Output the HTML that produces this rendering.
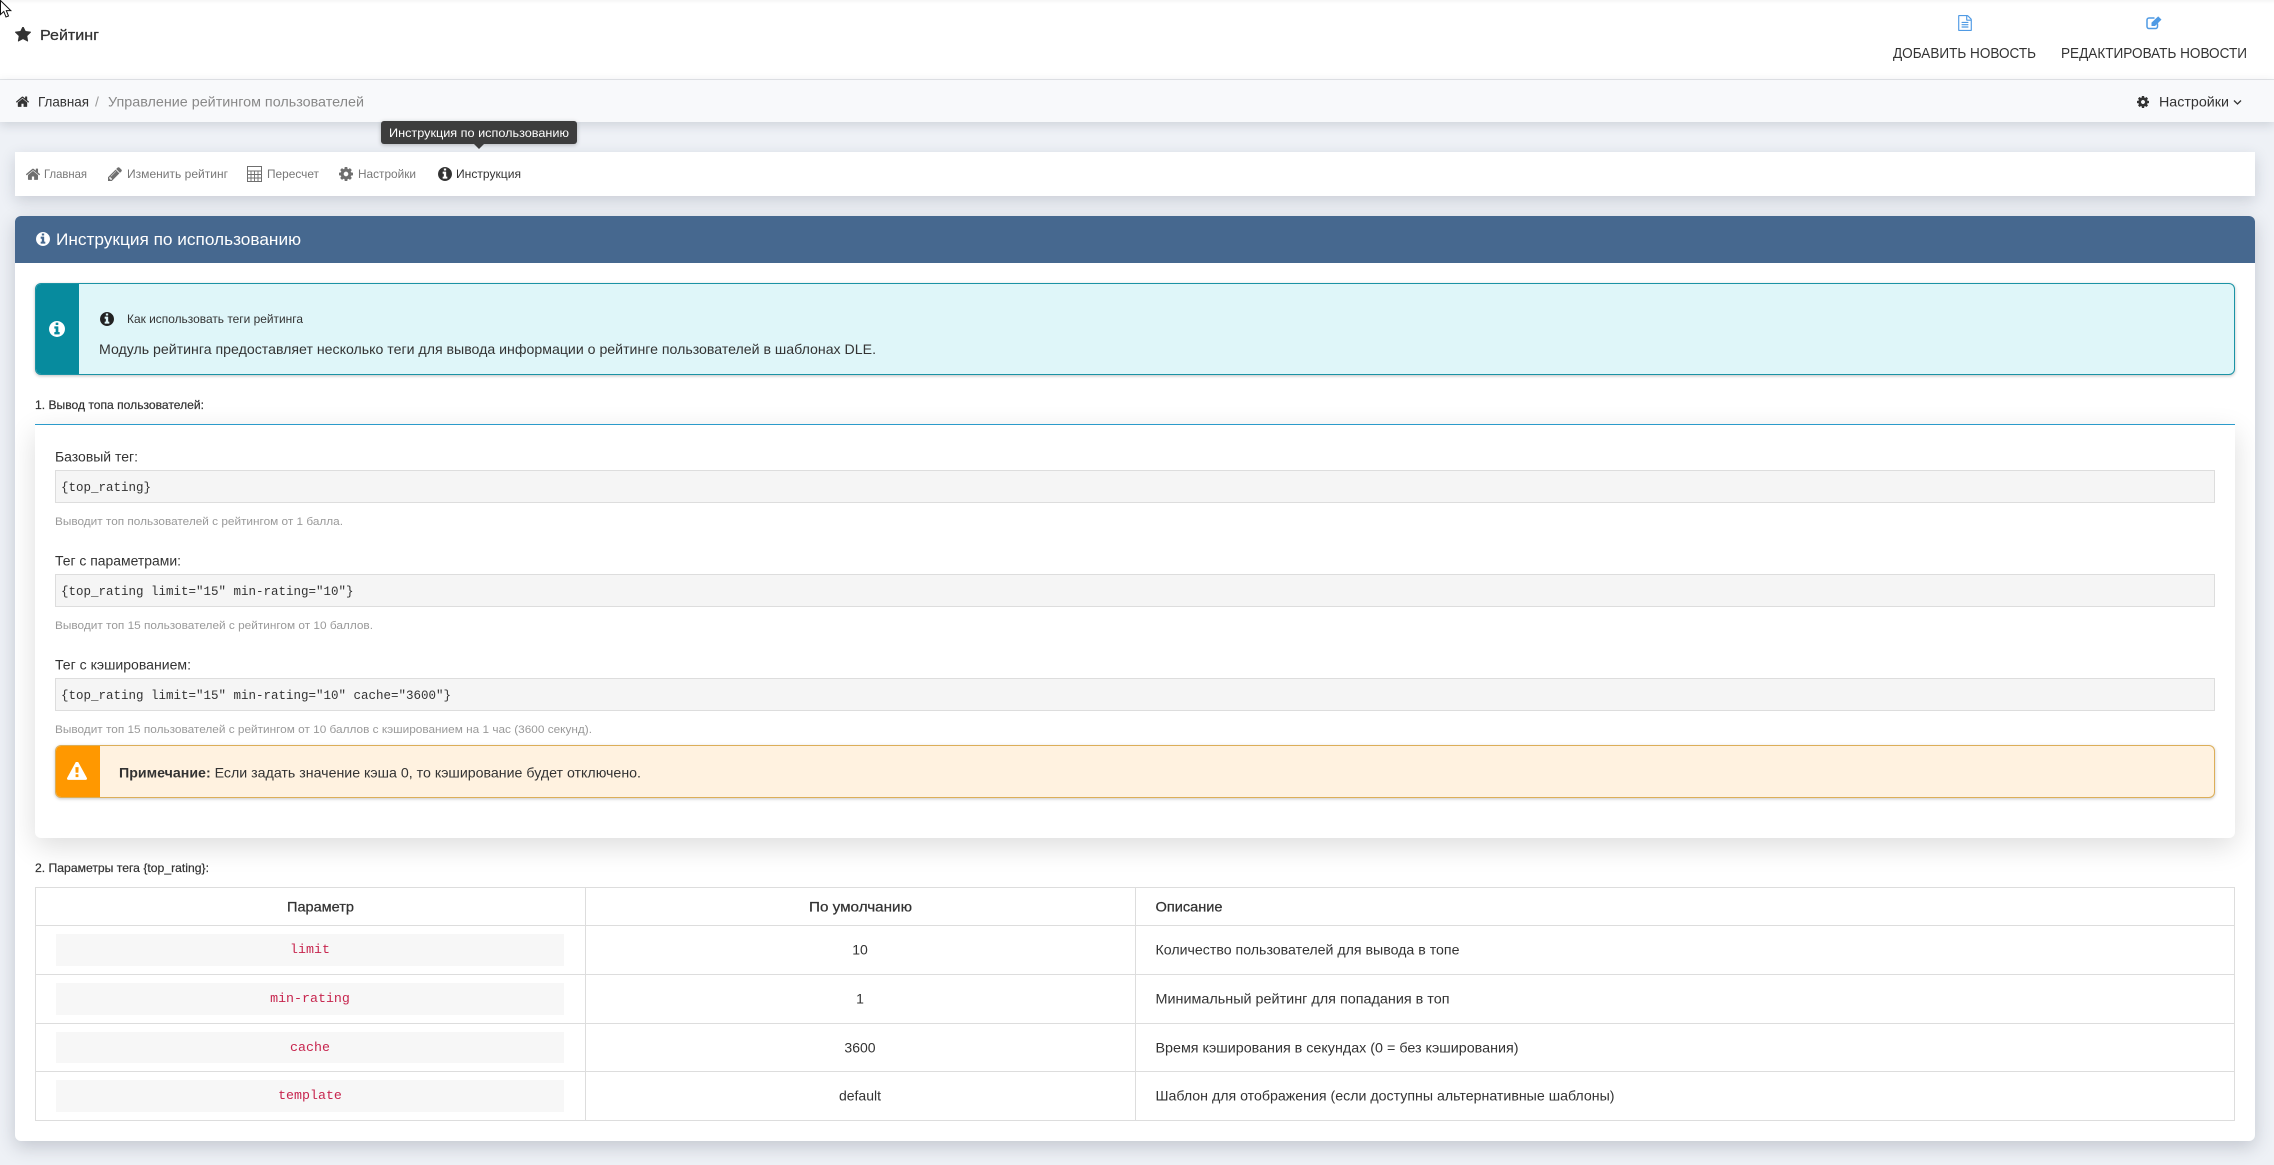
<!DOCTYPE html>
<html lang="ru">
<head>
<meta charset="utf-8">
<title>Рейтинг</title>
<style>
html,body{margin:0;padding:0;background:#eef1f6;}
#root{position:relative;width:2274px;height:1165px;overflow:hidden;background:#eef1f6;font-family:"Liberation Sans",sans-serif;}
.b{position:absolute;box-sizing:border-box;}
#ov{position:absolute;left:0;top:0;}
text{font-family:"Liberation Sans",sans-serif;fill:#333;}
.m{font-family:"Liberation Mono",monospace;}
</style>
</head>
<body>
<div id="root">
  <div class="b" style="left:0;top:0;width:2274px;height:80px;background:linear-gradient(#f6f6f6 0,#fff 4px);border-bottom:1px solid #e4e6e9;"></div>
  <div class="b" style="left:0;top:80px;width:2274px;height:42px;background:#f8f9fb;box-shadow:0 3px 10px rgba(40,50,70,.16);"></div>

  <div class="b" style="left:15px;top:152px;width:2240px;height:44px;background:#fff;box-shadow:0 5px 14px rgba(40,50,70,.18);"></div>

  <div class="b" style="left:15px;top:216px;width:2240px;height:925px;background:#fff;border-radius:6px;box-shadow:0 6px 18px rgba(40,50,70,.22);"></div>
  <div class="b" style="left:15px;top:216px;width:2240px;height:925px;border-radius:6px;overflow:hidden;">
    <div class="b" style="left:20px;top:209px;width:2200px;height:413px;background:#fff;border-radius:0 0 6px 6px;box-shadow:0 8px 28px rgba(0,0,0,.14);"></div>
    <div class="b" style="left:0;top:0;width:2240px;height:47px;background:#46688f;"></div>
  </div>

  <div class="b" style="left:35px;top:283px;width:2200px;height:92px;background:#dff6f9;border:1px solid #1a93a5;border-radius:6px;overflow:hidden;box-shadow:0 1px 3px rgba(0,0,0,.25);">
    <div class="b" style="left:-1px;top:-1px;width:44px;height:92px;background:#078b9e;"></div>
  </div>
  <div class="b" style="left:35px;top:424px;width:2200px;height:1px;background:#2b9bcb;"></div>

  <div class="b" style="left:55px;top:470px;width:2160px;height:33px;background:#f5f5f5;border:1px solid #ddd;"></div>
  <div class="b" style="left:55px;top:574px;width:2160px;height:33px;background:#f5f5f5;border:1px solid #ddd;"></div>
  <div class="b" style="left:55px;top:678px;width:2160px;height:33px;background:#f5f5f5;border:1px solid #ddd;"></div>

  <div class="b" style="left:55px;top:745px;width:2160px;height:53px;background:#fff2e0;border:1px solid #dcae58;border-radius:6px;overflow:hidden;box-shadow:0 1px 3px rgba(0,0,0,.22);">
    <div class="b" style="left:-1px;top:-1px;width:45px;height:53px;background:#ff9800;"></div>
  </div>

  <div class="b" style="left:35px;top:887px;width:2200px;height:234px;background:#fff;border:1px solid #ddd;"></div>
  <div class="b" style="left:36px;top:925px;width:2198px;height:1px;background:#ddd;"></div>
  <div class="b" style="left:36px;top:974px;width:2198px;height:1px;background:#ddd;"></div>
  <div class="b" style="left:36px;top:1023px;width:2198px;height:1px;background:#ddd;"></div>
  <div class="b" style="left:36px;top:1071px;width:2198px;height:1px;background:#ddd;"></div>
  <div class="b" style="left:585px;top:888px;width:1px;height:232px;background:#ddd;"></div>
  <div class="b" style="left:1135px;top:888px;width:1px;height:232px;background:#ddd;"></div>
  <div class="b" style="left:56px;top:934px;width:508px;height:32px;background:#f7f7f7;"></div>
  <div class="b" style="left:56px;top:983px;width:508px;height:32px;background:#f7f7f7;"></div>
  <div class="b" style="left:56px;top:1032px;width:508px;height:31px;background:#f7f7f7;"></div>
  <div class="b" style="left:56px;top:1080px;width:508px;height:32px;background:#f7f7f7;"></div>

  <div class="b" style="left:381px;top:121px;width:196px;height:23px;background:#3d3d3d;border-radius:3px;box-shadow:0 1px 4px rgba(0,0,0,.25);"></div>
  <div class="b" style="left:474px;top:144px;width:0;height:0;border-left:5px solid transparent;border-right:5px solid transparent;border-top:5px solid #3d3d3d;"></div>

  <svg id="ov" width="2274" height="1165" viewBox="0 0 2274 1165" xmlns="http://www.w3.org/2000/svg">
    <defs>
      <symbol id="i-info" viewBox="128 128 1536 1536"><path d="M1152 1376v-160q0-14-9-23t-23-9h-96v-512q0-14-9-23t-23-9h-320q-14 0-23 9t-9 23v160q0 14 9 23t23 9h96v320h-96q-14 0-23 9t-9 23v160q0 14 9 23t23 9h448q14 0 23-9t9-23zm-128-896v-160q0-14-9-23t-23-9h-192q-14 0-23 9t-9 23v160q0 14 9 23t23 9h192q14 0 23-9t9-23zm640 416q0 209-103 385.5t-279.5 279.5-385.5 103-385.5-103-279.5-279.5-103-385.5 103-385.5 279.5-279.5 385.5-103 385.5 103 279.5 279.5 103 385.5z"/></symbol>
      <symbol id="i-star" viewBox="64 128 1664 1536"><path d="M1728 647q0 22-26 48l-363 354 86 500q1 7 1 20 0 21-10.5 35.5t-30.5 14.5q-19 0-40-12l-449-236-449 236q-22 12-40 12-21 0-31.5-14.5t-10.5-35.5q0-6 2-20l86-500-364-354q-25-27-25-48 0-37 56-46l502-73 225-455q19-41 49-41t49 41l225 455 502 73q56 9 56 46z"/></symbol>
      <symbol id="i-home" viewBox="96 200 1600 1340"><path d="M1472 992v480q0 26-19 45t-45 19h-384v-384h-256v384h-384q-26 0-45-19t-19-45v-480q0-1 .5-3t.5-3l575-474 575 474q1 2 1 6zm223-69l-62 74q-8 9-21 11h-3q-13 0-21-7l-692-577-692 577q-12 8-24 7-13-2-21-11l-62-74q-8-10-7-23.5t11-21.5l719-599q32-26 76-26t76 26l244 204v-195q0-14 9-23t23-9h192q14 0 23 9t9 23v408l219 182q10 8 11 21.5t-7 23.5z"/></symbol>
      <symbol id="i-cog" viewBox="128 128 1536 1536"><path d="M1152 896q0-106-75-181t-181-75-181 75-75 181 75 181 181 75 181-75 75-181zm512-109v222q0 12-8 23t-20 13l-185 28q-19 54-39 91 35 50 107 138 10 12 10 25t-9 23q-27 37-99 108t-94 71q-12 0-26-9l-138-108q-44 23-91 38-16 136-29 186-7 28-36 28h-222q-14 0-24.5-8.5t-11.5-21.5l-28-184q-49-16-90-37l-141 107q-10 9-25 9-14 0-25-11-126-114-165-168-7-10-7-23 0-12 8-23 15-21 51-66.5t54-70.5q-27-50-41-99l-183-27q-13-2-21-12.5t-8-23.5v-222q0-12 8-23t19-13l186-28q14-46 39-92-40-57-107-138-10-12-10-24 0-10 9-23 26-36 98.5-107.5t94.5-71.5q13 0 26 10l138 107q44-23 91-38 16-136 29-186 7-28 36-28h222q14 0 24.5 8.5t11.5 21.5l28 184q49 16 90 37l142-107q9-9 24-9 13 0 25 10 129 119 165 170 7 8 7 22 0 12-8 23-15 21-51 66.5t-54 70.5q26 50 41 98l183 28q13 2 21 12.5t8 23.5z"/></symbol>
      <symbol id="i-pencil" viewBox="128 128 1536 1536"><path d="M491 1536l91-91-235-235-91 91v107h128v128h107zm523-928q0-22-22-22-10 0-17 7l-542 542q-7 7-7 17 0 22 22 22 10 0 17-7l542-542q7-7 7-17zm-54-192l416 416-832 832h-416v-416zm683 96q0 53-37 90l-166 166-416-416 166-165q36-38 90-38 53 0 91 38l235 234q37 39 37 91z"/></symbol>
      <symbol id="i-warn" viewBox="0 64 1792 1600"><path d="M1024 1375v-190q0-14-9.5-23.5t-22.5-9.5h-192q-13 0-22.5 9.5t-9.5 23.5v190q0 14 9.5 23.5t22.5 9.5h192q13 0 22.5-9.5t9.5-23.5zm-2-374l18-459q0-12-10-19-13-11-24-11h-220q-11 0-24 11-10 7-10 21l17 457q0 10 10 16.5t24 6.5h185q14 0 23.5-6.5t10.5-16.5zm-14-934l768 1408q35 63-2 126-17 29-46.5 46t-63.5 17h-1536q-34 0-63.5-17t-46.5-46q-37-63-2-126l768-1408q17-31 47-49t65-18 65 18 47 49z"/></symbol>
      <symbol id="i-file" viewBox="128 0 1536 1792"><path d="M1596 380q28 28 48 76t20 88v1152q0 40-28 68t-68 28h-1344q-40 0-68-28t-28-68v-1600q0-40 28-68t68-28h896q40 0 88 20t76 48zm-444-244v376h376q-10-29-22-41l-313-313q-12-12-41-22zm384 1528v-1024h-416q-40 0-68-28t-28-68v-416h-768v1536h1280zm-1024-864q0-14 9-23t23-9h704q14 0 23 9t9 23v64q0 14-9 23t-23 9h-704q-14 0-23-9t-9-23v-64zm736 224q14 0 23 9t9 23v64q0 14-9 23t-23 9h-704q-14 0-23-9t-9-23v-64q0-14 9-23t23-9h704zm0 256q14 0 23 9t9 23v64q0 14-9 23t-23 9h-704q-14 0-23-9t-9-23v-64q0-14 9-23t23-9h704z"/></symbol>
    </defs>

    <!-- header -->
    <use href="#i-star" x="15" y="27" width="16" height="15" fill="#333"/>
    <text x="40" y="40" font-size="15" textLength="59" lengthAdjust="spacingAndGlyphs" stroke="#333" stroke-width=".25">Рейтинг</text>
    <use href="#i-file" x="1958" y="15" width="14" height="16" fill="#4f9ae4"/>
    <g>
      <path d="M2157.500 23.500V26.500A2 2 0 0 1 2155.500 28.500H2149A2 2 0 0 1 2147 26.500V20A2 2 0 0 1 2149 18H2154.500" fill="none" stroke="#4f9ae4" stroke-width="1.500"/>
      <path d="M2151.500 22.600L2158.200 16.400L2161.500 19.600L2155 26H2151.500Z" fill="#4f9ae4"/>
    </g>
    <text x="1893" y="58" font-size="14.500" textLength="143" lengthAdjust="spacingAndGlyphs">ДОБАВИТЬ НОВОСТЬ</text>
    <text x="2061" y="58" font-size="14.500" textLength="186" lengthAdjust="spacingAndGlyphs">РЕДАКТИРОВАТЬ НОВОСТИ</text>

    <!-- breadcrumbs -->
    <use href="#i-home" x="16" y="96" width="13" height="11" fill="#333"/>
    <text x="38" y="106.500" font-size="14" textLength="51" lengthAdjust="spacingAndGlyphs">Главная</text>
    <text x="95" y="106.500" font-size="14" style="fill:#999">/</text>
    <text x="108" y="106.500" font-size="14" textLength="256" lengthAdjust="spacingAndGlyphs" style="fill:#888">Управление рейтингом пользователей</text>
    <use href="#i-cog" x="2137" y="96" width="12" height="12" fill="#333"/>
    <text x="2159" y="106.500" font-size="14" textLength="70" lengthAdjust="spacingAndGlyphs">Настройки</text>
    <polyline points="2234,100.500 2237.500,104 2241,100.500" fill="none" stroke="#333" stroke-width="1.300"/>

    <!-- tooltip -->
    <text x="389" y="137" font-size="12" textLength="180" lengthAdjust="spacingAndGlyphs" style="fill:#fff">Инструкция по использованию</text>

    <!-- nav -->
    <use href="#i-home" x="26" y="168" width="14" height="12" fill="#6f6f6f"/>
    <text x="44" y="178" font-size="12" textLength="43" lengthAdjust="spacingAndGlyphs" style="fill:#777">Главная</text>
    <use href="#i-pencil" x="108" y="167" width="14" height="14" fill="#6f6f6f"/>
    <text x="127" y="178" font-size="12" textLength="101" lengthAdjust="spacingAndGlyphs" style="fill:#777">Изменить рейтинг</text>
    <g fill="none" stroke="#6f6f6f">
      <rect x="247.500" y="166.500" width="14" height="15" stroke-width="1"/>
      <path d="M247.500 171h14M247.500 174.500h14M247.500 178h14M251 171v10.500M254.500 171v10.500M258 171v10.500" stroke-width=".9"/>
    </g>
    <text x="267" y="178" font-size="12" textLength="52" lengthAdjust="spacingAndGlyphs" style="fill:#777">Пересчет</text>
    <use href="#i-cog" x="339" y="167" width="14" height="14" fill="#6f6f6f"/>
    <text x="358" y="178" font-size="12" textLength="58" lengthAdjust="spacingAndGlyphs" style="fill:#777">Настройки</text>
    <use href="#i-info" x="438" y="167" width="14" height="14" fill="#333"/>
    <text x="456" y="178" font-size="12" textLength="65" lengthAdjust="spacingAndGlyphs" style="fill:#333">Инструкция</text>

    <!-- panel title -->
    <use href="#i-info" x="36" y="232" width="14" height="14" fill="#fff"/>
    <text x="56" y="245" font-size="17" textLength="245" lengthAdjust="spacingAndGlyphs" style="fill:#fff">Инструкция по использованию</text>

    <!-- info alert -->
    <use href="#i-info" x="49" y="321" width="16" height="16" fill="#fff"/>
    <use href="#i-info" x="100" y="312" width="14" height="14" fill="#222"/>
    <text x="127" y="323" font-size="12" textLength="176" lengthAdjust="spacingAndGlyphs">Как использовать теги рейтинга</text>
    <text x="99" y="354" font-size="14" textLength="777" lengthAdjust="spacingAndGlyphs">Модуль рейтинга предоставляет несколько теги для вывода информации о рейтинге пользователей в шаблонах DLE.</text>

    <text x="35" y="409" font-size="12" textLength="169" lengthAdjust="spacingAndGlyphs" stroke="#333" stroke-width=".2">1. Вывод топа пользователей:</text>

    <!-- rows -->
    <text x="55" y="461.500" font-size="13.500" textLength="83" lengthAdjust="spacingAndGlyphs">Базовый тег:</text>
    <text class="m" x="61" y="491" font-size="12.500">{top_rating}</text>
    <text x="55" y="525" font-size="11" textLength="288" lengthAdjust="spacingAndGlyphs" style="fill:#999">Выводит топ пользователей с рейтингом от 1 балла.</text>

    <text x="55" y="565.500" font-size="13.500" textLength="126" lengthAdjust="spacingAndGlyphs">Тег с параметрами:</text>
    <text class="m" x="61" y="595" font-size="12.500">{top_rating limit="15" min-rating="10"}</text>
    <text x="55" y="629" font-size="11" textLength="318" lengthAdjust="spacingAndGlyphs" style="fill:#999">Выводит топ 15 пользователей с рейтингом от 10 баллов.</text>

    <text x="55" y="669.500" font-size="13.500" textLength="136" lengthAdjust="spacingAndGlyphs">Тег с кэшированием:</text>
    <text class="m" x="61" y="699" font-size="12.500">{top_rating limit="15" min-rating="10" cache="3600"}</text>
    <text x="55" y="733" font-size="11" textLength="537" lengthAdjust="spacingAndGlyphs" style="fill:#999">Выводит топ 15 пользователей с рейтингом от 10 баллов с кэшированием на 1 час (3600 секунд).</text>

    <!-- warning -->
    <use href="#i-warn" x="67" y="762" width="20" height="18" fill="#fff"/>
    <text x="119" y="777.500" font-size="14" textLength="522" lengthAdjust="spacingAndGlyphs"><tspan font-weight="bold">Примечание:</tspan> Если задать значение кэша 0, то кэширование будет отключено.</text>

    <text x="35" y="872" font-size="12" textLength="174" lengthAdjust="spacingAndGlyphs" stroke="#333" stroke-width=".2">2. Параметры тега {top_rating}:</text>

    <!-- table -->
    <text x="287" y="911.500" font-size="14" textLength="67" lengthAdjust="spacingAndGlyphs" stroke="#333" stroke-width=".25">Параметр</text>
    <text x="809" y="911.500" font-size="14" textLength="103" lengthAdjust="spacingAndGlyphs" stroke="#333" stroke-width=".25">По умолчанию</text>
    <text x="1155.500" y="911.500" font-size="14" textLength="67" lengthAdjust="spacingAndGlyphs" stroke="#333" stroke-width=".25">Описание</text>

    <g font-size="13.300" text-anchor="middle">
      <text class="m" x="310" y="953" style="fill:#c7254e">limit</text>
      <text class="m" x="310" y="1002" style="fill:#c7254e">min-rating</text>
      <text class="m" x="310" y="1051" style="fill:#c7254e">cache</text>
      <text class="m" x="310" y="1099" style="fill:#c7254e">template</text>
    </g>
    <g font-size="14" text-anchor="middle">
      <text x="860" y="954.500">10</text>
      <text x="860" y="1003.500">1</text>
      <text x="860" y="1052.500">3600</text>
      <text x="860" y="1100.500">default</text>
    </g>
    <text x="1155.500" y="954.500" font-size="14" textLength="304" lengthAdjust="spacingAndGlyphs">Количество пользователей для вывода в топе</text>
    <text x="1155.500" y="1003.500" font-size="14" textLength="294" lengthAdjust="spacingAndGlyphs">Минимальный рейтинг для попадания в топ</text>
    <text x="1155.500" y="1052.500" font-size="14" textLength="363" lengthAdjust="spacingAndGlyphs">Время кэширования в секундах (0 = без кэширования)</text>
    <text x="1155.500" y="1100.500" font-size="14" textLength="459" lengthAdjust="spacingAndGlyphs">Шаблон для отображения (если доступны альтернативные шаблоны)</text>

    <!-- cursor -->
    <path d="M0.500 0.500V14.500L3.800 11.500L6 17L8.500 16L6.300 10.600H10.800Z" fill="#fff" stroke="#111" stroke-width="1"/>
  </svg>
</div>
</body>
</html>
